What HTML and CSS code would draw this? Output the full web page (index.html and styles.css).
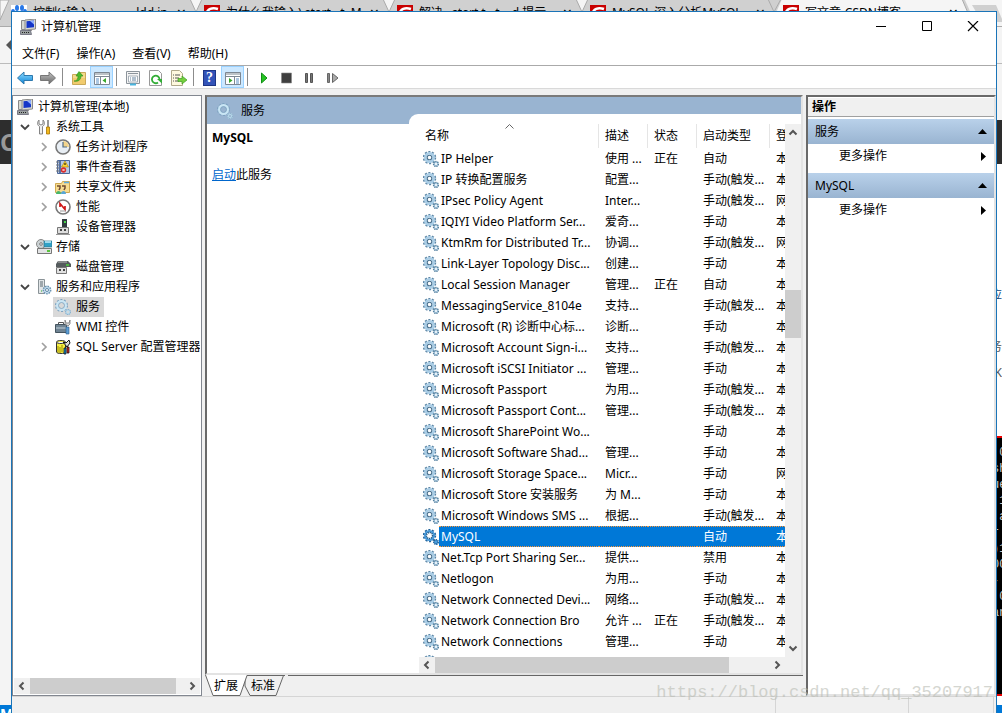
FILE: index.html
```html
<!DOCTYPE html>
<html lang="zh-CN">
<head>
<meta charset="utf-8">
<title>计算机管理</title>
<link rel="stylesheet" href="styles.css">
</head>
<body>
<svg class="defs" aria-hidden="true">
  <linearGradient id="blue" x1="0" y1="0" x2="0" y2="1"><stop offset="0" stop-color="#8fdcff"/><stop offset="1" stop-color="#0b84d8"/></linearGradient>
  <linearGradient id="gray" x1="0" y1="0" x2="0" y2="1"><stop offset="0" stop-color="#c4c4c4"/><stop offset="1" stop-color="#666"/></linearGradient>
  <symbol id="gear" viewBox="0 0 16 16">
    <circle cx="6.500" cy="6.500" r="5.700" fill="none" stroke="#5d86a5" stroke-width="2" stroke-dasharray="2 1.580"/>
    <circle cx="6.500" cy="6.500" r="4.200" fill="#fff" stroke="#a9cde6" stroke-width="2.600"/>
    <circle cx="6.500" cy="6.500" r="2.300" fill="#fff" stroke="#4a7290" stroke-width="1.100"/>
    <circle cx="13" cy="13" r="2.400" fill="#b7d4e8" stroke="#55809f" stroke-width="1.500" stroke-dasharray="1.200 .700"/>
    <circle cx="13" cy="13" r=".900" fill="#fff"/>
  </symbol>
  <symbol id="gear-on" viewBox="0 0 16 16">
    <circle cx="6.500" cy="6.500" r="5.700" fill="none" stroke="#22639a" stroke-width="2" stroke-dasharray="2 1.580"/>
    <circle cx="6.500" cy="6.500" r="4.200" fill="#fff" stroke="#4a9bda" stroke-width="2.600"/>
    <circle cx="6.500" cy="6.500" r="3" fill="#fff" stroke="#174c78" stroke-width="1.500" stroke-dasharray="1 1"/>
    <circle cx="13" cy="13" r="2.200" fill="#4a9bda" stroke="#22639a" stroke-width="1.600" stroke-dasharray="1.200 .600"/>
  </symbol>
  <symbol id="gear-pale" viewBox="0 0 16 16">
    <circle cx="6.500" cy="6.500" r="5.700" fill="none" stroke="#7da3c0" stroke-width="1.600" stroke-dasharray="2 1.580"/>
    <circle cx="6.500" cy="6.500" r="4.300" fill="none" stroke="#c9e6f5" stroke-width="2.400"/>
    <circle cx="6.500" cy="6.500" r="3" fill="none" stroke="#7a9fbc" stroke-width=".800"/>
    <circle cx="13" cy="13" r="2" fill="none" stroke="#b5d6e8" stroke-width="1.800"/>
    <circle cx="13" cy="13" r="2.600" fill="none" stroke="#7da3c0" stroke-width=".900" stroke-dasharray="1.200 .800"/>
  </symbol>
  <symbol id="computer" viewBox="0 0 16 16">
    <path d="M1.500 1.500h4v9h-4z" fill="#d7d9d2" stroke="#888"/><path d="M5 1l10.500-1v10L5 11z" fill="#d7d9d2" stroke="#8a8a8a"/>
    <path d="M6.500 2.200l7.500-.700v6.700l-7.500.700z" fill="#1536c8"/><path d="M10 1.900l4-.400v4z" fill="#8fb0ff"/>
    <path d="M8 10h4v2H8z" fill="#999"/><path d="M.500 11.500h10l1 4H.500z" fill="#9aa0a0" stroke="#667" stroke-width=".800"/><path d="M2 13.500h7" stroke="#222" stroke-dasharray="1 1"/>
  </symbol>
  <symbol id="down" viewBox="0 0 10 10"><path d="M1 3l4 4 4-4" fill="none" stroke="#444" stroke-width="1.800"/></symbol>
  <symbol id="right" viewBox="0 0 10 10"><path d="M3 1l4 4-4 4" fill="none" stroke="#a0a0a0" stroke-width="1.700"/></symbol>
  <symbol id="s-left" viewBox="0 0 16 16"><path d="M9.500 4.500L6 8l3.500 3.500" fill="none" stroke="#555" stroke-width="2"/></symbol>
  <symbol id="s-right" viewBox="0 0 16 16"><path d="M6.500 4.500L10 8l-3.500 3.500" fill="none" stroke="#555" stroke-width="2"/></symbol>
  <symbol id="s-up" viewBox="0 0 16 16"><path d="M4.500 10.500L8 7l3.500 3.500" fill="none" stroke="#555" stroke-width="2"/></symbol>
  <symbol id="s-down" viewBox="0 0 16 16"><path d="M4.500 5.500L8 9l3.500-3.500" fill="none" stroke="#555" stroke-width="2"/></symbol>
  <symbol id="csdn" viewBox="0 0 16 16"><path d="M0 0h16v16H0z" fill="#c90000"/><path d="M14 4C8 2 3 4 2.500 9S8 14 13 12" fill="none" stroke="#fff" stroke-width="2.500"/></symbol>
</svg>

<div class="backdrop">
  <svg class="strip" width="1002" height="27" aria-hidden="true">
    <path d="M0 0h1002v27H0z" fill="#d0d0d0"/>
    <path d="M0 0h9L0 20z" fill="#f5f5f5" stroke="#aaa"/>
    <path d="M190 -1l6 13 6-13z" fill="#f5f5f5" stroke="#aaa"/>
    <path d="M383 -1l6 13 6-13z" fill="#f5f5f5" stroke="#aaa"/>
    <path d="M576 -1l6 13 6-13z" fill="#f5f5f5" stroke="#aaa"/>
    <path d="M782 -1h180l12 28H770z" fill="#f5f5f5"/><path d="M768 -1l6 13 7-13M962 -1l12 28" fill="none" stroke="#aaa"/>
    <path d="M965 0h37v27h-25z" fill="#f5f5f5"/><path d="M972 5h24l6 14v3h-20z" fill="#d0d0d0"/><path d="M0 26.500h11M997 26.500h5" stroke="#aaa"/>
  </svg>
  <div class="browser-tabs">
    <div class="browser-tab"><svg class="icon" viewBox="0 0 16 16"><path d="M0 0h16v16H0z" fill="#fff"/><g fill="#2878e8"><ellipse cx="6" cy="3" rx="2" ry="3"/><ellipse cx="11" cy="3" rx="2" ry="3"/><ellipse cx="2" cy="7" rx="2" ry="3"/><ellipse cx="14" cy="7" rx="2" ry="3"/></g></svg><span>控制(c输入)&emsp; &emsp; &emsp;ldd in s</span><b>×</b></div>
    <div class="browser-tab"><svg class="icon"><use href="#csdn"/></svg><span>为什么我输入) start , t &nbsp;M</span><b>×</b></div>
    <div class="browser-tab"><svg class="icon"><use href="#csdn"/></svg><span>解决 &ensp;start t , t &ensp; d 提示</span><b>×</b></div>
    <div class="browser-tab"><svg class="icon"><use href="#csdn"/></svg><span>MySQL 深入分析MySQL</span><b>×</b></div>
    <div class="browser-tab"><svg class="icon"><use href="#csdn"/></svg><span>写文章-CSDN博客</span><b>×</b></div>
  </div>
  <div class="edge edge-left">
    <div class="edge-bar"><svg width="11" height="36"><path d="M11 13l-5 5 5 5z" fill="#555"/></svg></div>
    <div class="edge-gap"></div>
    <div class="edge-dark"><span>C</span></div>
    <div class="edge-fill"></div>
    <div class="edge-task">M</div>
  </div>
  <div class="edge edge-right">
    <div class="edge-bar"></div>
    <div class="edge-gap"></div>
    <div class="edge-dark"></div>
    <div class="edge-page"><p>应</p><p>务</p><p>K</p></div>
    <pre class="edge-console">:0
sh
ue
 1
:a
r
)1
00
-
:0
an

:
,</pre>
    <div class="edge-end"></div>
    <div class="edge-task"></div>
  </div>
</div>

<main class="window">
  <header class="title-bar">
    <svg class="icon"><use href="#computer"/></svg>
    <h1>计算机管理</h1>
    <div class="window-buttons">
      <button aria-label="最小化"><svg width="12" height="12"><path d="M1 5.500h10" stroke="#000"/></svg></button>
      <button aria-label="最大化"><svg width="12" height="12"><path d="M1.500 .500h9v9h-9z" fill="none" stroke="#000"/></svg></button>
      <button aria-label="关闭"><svg width="12" height="12"><path d="M1 0l10 10M11 0L1 10" stroke="#000" stroke-width="1.200"/></svg></button>
    </div>
  </header>
  <nav class="menu"><button>文件(F)</button><button>操作(A)</button><button>查看(V)</button><button>帮助(H)</button></nav>
  <div class="toolbar">
    <button aria-label="后退"><svg class="icon" viewBox="0 0 16 16"><path d="M.500 8L7 2v3.500h8.500v5H7V14z" fill="url(#blue)" stroke="#2d78ad"/></svg></button>
    <button aria-label="前进"><svg class="icon" viewBox="0 0 16 16"><path d="M15.500 8L9 2v3.500H.500v5H9V14z" fill="url(#gray)" stroke="#777"/></svg></button>
    <i></i>
    <button aria-label="向上一级"><svg class="icon" viewBox="0 0 16 16"><path d="M1.500 4.500h6l1-2h6v12h-13z" fill="#f5d98b" stroke="#c9a95a"/><path d="M2 8h12v6H2z" fill="#f1cb6d"/><path d="M3 11c3 0 4-2 4-5H5l3-4.500L12 6h-2c0 4-3 6-7 5z" fill="#4db92d" stroke="#2e8e1a" stroke-width=".600"/></svg></button>
    <button class="on" aria-label="显示控制台树"><svg class="icon" viewBox="0 0 16 16"><path d="M.500 2.500h15v12H.500z" fill="#fff" stroke="#7d8792"/><path d="M1 4h14M1 6.500h14" stroke="#7d8792" stroke-width="1.200"/><path d="M6.500 7v7" stroke="#7d8792"/><path d="M2 9h3M2 11h3M2 13h3" stroke="#5a8fc4"/><path d="M12 8v5l-3.500-2.500z" fill="#38a82b"/></svg></button>
    <i></i>
    <button aria-label="属性"><svg class="icon" viewBox="0 0 16 16"><path d="M1.500 1.500h13v12h-13z" fill="#f4f4f4" stroke="#8c949b"/><path d="M3 3.500h10" stroke="#8c949b"/><path d="M3.500 6h9v6h-9z" fill="#fff" stroke="#a7b0b8"/><path d="M5 8h1M7 8h4M5 10h1M7 10h4" stroke="#62809c"/><path d="M5 14.500h6" stroke="#49b5df" stroke-width="2"/></svg></button>
    <button aria-label="刷新"><svg class="icon" viewBox="0 0 16 16"><path d="M1.500.500h9l3 3v12h-12z" fill="#fff" stroke="#999"/><path d="M10 12.500A3.800 3.800 0 1 1 11.500 9" fill="none" stroke="#32ad36" stroke-width="1.800"/><path d="M9 9h5v4.500z" fill="#32ad36"/></svg></button>
    <button aria-label="导出列表"><svg class="icon" viewBox="0 0 16 16"><path d="M.500.500h8l3 3v12H.500z" fill="#fff9df" stroke="#b1a98b"/><path d="M2 5h1M4 5h5M2 8h1M4 8h4M2 11h1M4 11h4" stroke="#555"/><path d="M7 8.500h4V6l5 4-5 4v-2.500H7z" fill="#76cf3e" stroke="#3d9e24" stroke-width=".700"/></svg></button>
    <i></i>
    <button class="help" aria-label="帮助"><span>?</span></button>
    <button class="on" aria-label="显示操作窗格"><svg class="icon" viewBox="0 0 16 16"><path d="M.500 2.500h15v12H.500z" fill="#fff" stroke="#7d8792"/><path d="M1 4h14M1 6.500h14" stroke="#7d8792" stroke-width="1.200"/><path d="M9.500 7v7" stroke="#7d8792"/><path d="M11 9h3M11 11h3M11 13h3" stroke="#5a8fc4"/><path d="M4 8v5l3.500-2.500z" fill="#38a82b"/></svg></button>
    <i></i>
    <button aria-label="启动服务"><svg class="icon" viewBox="0 0 16 16"><path d="M5.500 3v10l5.500-5z" fill="#26c422" stroke="#129017"/></svg></button>
    <button aria-label="停止服务"><svg class="icon" viewBox="0 0 16 16"><path d="M2.500 3h10v10h-10z" fill="#3f3f3f" stroke="#888" stroke-width=".600"/></svg></button>
    <button aria-label="暂停服务"><svg class="icon" viewBox="0 0 16 16"><path d="M3.500 3.500h2v9h-2zM8.500 3.500h2v9h-2z" fill="#777" stroke="#555"/></svg></button>
    <button aria-label="重启动服务"><svg class="icon" viewBox="0 0 16 16"><path d="M2.500 3.500h2v9h-2z" fill="#888" stroke="#666"/><path d="M7.500 3.500v9l5.500-4.500z" fill="#aaa" stroke="#666"/></svg></button>
  </div>

  <div class="panes">
    <section class="tree-pane">
      <ul class="tree">
        <li><svg class="icon"><use href="#computer"/></svg><span>计算机管理(本地)</span></li>
        <li class="l1"><svg class="chev"><use href="#down"/></svg><svg class="icon" viewBox="0 0 16 16"><path d="M3 1v4l2 1 2-1V1c2 2 2 5-.5 6.500V15h-3V7.500C1 6 1 3 3 1z" fill="#eee" stroke="#777" stroke-width=".9"/><path d="M12 1v7" stroke="#777" stroke-width="1.500"/><path d="M10.500 8h3v7h-3z" fill="#f3b91d" stroke="#a87500" stroke-width=".8"/></svg><span>系统工具</span></li>
        <li class="l2"><svg class="chev"><use href="#right"/></svg><svg class="icon" viewBox="0 0 16 16"><circle cx="8" cy="8" r="7" fill="#e8eef4" stroke="#777" stroke-width="1.600"/><path d="M8 8V2a6 6 0 0 1 6 6z" fill="#f3d48a"/><path d="M8 3v5h4" fill="none" stroke="#4f6b86" stroke-width="1.200"/></svg><span>任务计划程序</span></li>
        <li class="l2"><svg class="chev"><use href="#right"/></svg><svg class="icon" viewBox="0 0 16 16"><path d="M2.500 1.500h12v13h-12z" fill="#b7c9e6" stroke="#4c6799"/><path d="M5 2v12" stroke="#38568c" stroke-width="1.500"/><path d="M1 3h3M1 6h3M1 9h3M1 12h3" stroke="#777"/><path d="M10 2l3.500 6h-7z" fill="#ffd533" stroke="#a78200" stroke-width=".6"/><path d="M10 4v2" stroke="#000"/><circle cx="8.500" cy="11" r="2.700" fill="#d92c2c"/><path d="M7.500 10l2 2m0-2l-2 2" stroke="#fff" stroke-width=".8"/></svg><span>事件查看器</span></li>
        <li class="l2"><svg class="chev"><use href="#right"/></svg><svg class="icon" viewBox="0 0 16 16"><path d="M.500 4.500h6l1-2h7v11H.500z" fill="#f7dc91" stroke="#d0a951"/><path d="M9 3.500h5" stroke="#60aee0" stroke-width="1.500"/><path d="M2 7h3v2l-1 2M7 7h3v2l-1 2" fill="none" stroke="#704b31" stroke-width="1.500"/><path d="M1 15c0-4 5-4 5 0z" fill="#49b66b"/><path d="M6 15c0-4 5-4 5 0z" fill="#59a7d7"/></svg><span>共享文件夹</span></li>
        <li class="l2"><svg class="chev"><use href="#right"/></svg><svg class="icon" viewBox="0 0 16 16"><circle cx="8" cy="8" r="7" fill="#fff" stroke="#777" stroke-width="1.600"/><path d="M5 8V4.500l5 6V7" fill="none" stroke="#cf1717" stroke-width="1.700"/><path d="M5 12h6" stroke="#999"/></svg><span>性能</span></li>
        <li class="l2"><svg class="chev"></svg><svg class="icon" viewBox="0 0 16 16"><path d="M7 0h5v9H7z" fill="#303b3f"/><path d="M9 2h2v2H9z" fill="#45d447"/><path d="M2.500 8.500h11v6h-11z" fill="#ddd" stroke="#777"/><path d="M1 15.500h14" stroke="#999"/><path d="M5 10h2v2H5zM9 10h2v2H9z" fill="#444"/></svg><span>设备管理器</span></li>
        <li class="l1"><svg class="chev"><use href="#down"/></svg><svg class="icon" viewBox="0 0 16 16"><circle cx="5" cy="5" r="4.500" fill="#ccd3d5" stroke="#888"/><circle cx="5" cy="5" r="1.300" fill="#fff" stroke="#777"/><path d="M8 2h8v6H8z" fill="#31a2c7" stroke="#317389" stroke-width=".7"/><path d="M9 3h6" stroke="#c7effb" stroke-width="1.500"/><path d="M1.500 9.500h14v5h-14z" fill="#e2e3e4" stroke="#777"/><path d="M11 11h3v2h-3z" fill="#5ac33e"/></svg><span>存储</span></li>
        <li class="l2"><svg class="chev"></svg><svg class="icon" viewBox="0 0 16 16"><path d="M3 2h10l3 3v3H1V5z" fill="#555b5d"/><path d="M3 3h9" stroke="#bbb"/><path d="M11 6h3" stroke="#4ed63d" stroke-width="1.500"/><path d="M1.500 8.500h10v6h-10z" fill="#e2e2e2" stroke="#777"/><path d="M4 10h2v2H4zM8 10h2v2H8z" fill="#444"/></svg><span>磁盘管理</span></li>
        <li class="l1"><svg class="chev"><use href="#down"/></svg><svg class="icon" viewBox="0 0 16 16"><path d="M2.500.500h6v14h-6z" fill="#e1e5e7" stroke="#8a9397"/><path d="M4 3h3M4 5h3M4 7h3" stroke="#5d6b72"/><path d="M5 12h1" stroke="#33b533"/><circle cx="11" cy="11" r="3.700" fill="#c6deef" stroke="#6b94b1" stroke-width="1.500" stroke-dasharray="1.500 1"/><circle cx="11" cy="11" r="1.500" fill="#fff" stroke="#618aa8"/></svg><span>服务和应用程序</span></li>
        <li class="l2 chosen"><svg class="chev"></svg><svg class="icon"><use href="#gear-pale"/></svg><span>服务</span></li>
        <li class="l2"><svg class="chev"></svg><svg class="icon" viewBox="0 0 16 16"><path d="M.500 5.500h11v8H.500z" fill="#6f8392" stroke="#44545f"/><path d="M3.500 5V3.500h5V5" fill="none" stroke="#555"/><path d="M1 9h11" stroke="#c5d2db"/><path d="M10 1l1 3h3l1-3v4l-2 2-3-2z" fill="#ddd" stroke="#777" stroke-width=".800"/><path d="M11 8h3v7h-3z" fill="#5d9dd3" stroke="#285d8b" stroke-width=".6"/></svg><span>WMI 控件</span></li>
        <li class="l2"><svg class="chev"><use href="#right"/></svg><svg class="icon" viewBox="0 0 16 16"><path d="M1.500 3c0-2 9-2 9 0v10c0 2-9 2-9 0z" fill="#f6ef45" stroke="#333"/><path d="M1.500 3c0 2 9 2 9 0" fill="#fff" stroke="#333"/><path d="M3 7v6M5 8v6M7 6v7" stroke="#9b8d00"/><path d="M14 1l-3 3-3-1 4 5 3-4z" fill="#ddd" stroke="#111"/><path d="M9 9h2v6H9z" fill="#1595db" stroke="#111" stroke-width=".8"/><path d="M12 8h2v6h-2z" fill="#e52222" stroke="#111" stroke-width=".8"/></svg><span>SQL Server 配置管理器</span></li>
      </ul>
      <div class="hscroll"><svg class="icon"><use href="#s-left"/></svg><div class="track"><div class="thumb" style="width:95%"></div></div><svg class="icon"><use href="#s-right"/></svg></div>
    </section>

    <section class="center">
      <div class="services">
        <div class="services-head"><svg class="icon"><use href="#gear-pale"/></svg><h2>服务</h2></div>
        <div class="services-body">
          <div class="detail"><h3>MySQL</h3><p><a href="#start">启动</a>此服务</p></div>
          <div class="list">
            <div class="list-view">
              <table>
                <colgroup><col><col class="c-desc"><col class="c-state"><col class="c-type"><col class="c-user"></colgroup>
                <thead><tr><th>名称<svg class="sort" width="9" height="5"><path d="M.500 4.500l4-4 4 4" fill="none" stroke="#666"/></svg></th><th>描述</th><th>状态</th><th>启动类型</th><th>登</th></tr></thead>
                <tbody>
                <tr><td><div><svg class="icon"><use href="#gear"/></svg><span>IP Helper</span></div></td><td>使用 ...</td><td>正在</td><td>自动</td><td>本</td></tr>
                <tr><td><div><svg class="icon"><use href="#gear"/></svg><span>IP 转换配置服务</span></div></td><td>配置...</td><td></td><td>手动(触发...</td><td>本</td></tr>
                <tr><td><div><svg class="icon"><use href="#gear"/></svg><span>IPsec Policy Agent</span></div></td><td>Inter...</td><td></td><td>手动(触发...</td><td>网</td></tr>
                <tr><td><div><svg class="icon"><use href="#gear"/></svg><span>IQIYI Video Platform Ser...</span></div></td><td>爱奇...</td><td></td><td>手动</td><td>本</td></tr>
                <tr><td><div><svg class="icon"><use href="#gear"/></svg><span>KtmRm for Distributed Tr...</span></div></td><td>协调...</td><td></td><td>手动(触发...</td><td>网</td></tr>
                <tr><td><div><svg class="icon"><use href="#gear"/></svg><span>Link-Layer Topology Disc...</span></div></td><td>创建...</td><td></td><td>手动</td><td>本</td></tr>
                <tr><td><div><svg class="icon"><use href="#gear"/></svg><span>Local Session Manager</span></div></td><td>管理...</td><td>正在</td><td>自动</td><td>本</td></tr>
                <tr><td><div><svg class="icon"><use href="#gear"/></svg><span>MessagingService_8104e</span></div></td><td>支持...</td><td></td><td>手动(触发...</td><td>本</td></tr>
                <tr><td><div><svg class="icon"><use href="#gear"/></svg><span>Microsoft (R) 诊断中心标...</span></div></td><td>诊断...</td><td></td><td>手动</td><td>本</td></tr>
                <tr><td><div><svg class="icon"><use href="#gear"/></svg><span>Microsoft Account Sign-i...</span></div></td><td>支持...</td><td></td><td>手动(触发...</td><td>本</td></tr>
                <tr><td><div><svg class="icon"><use href="#gear"/></svg><span>Microsoft iSCSI Initiator ...</span></div></td><td>管理...</td><td></td><td>手动</td><td>本</td></tr>
                <tr><td><div><svg class="icon"><use href="#gear"/></svg><span>Microsoft Passport</span></div></td><td>为用...</td><td></td><td>手动(触发...</td><td>本</td></tr>
                <tr><td><div><svg class="icon"><use href="#gear"/></svg><span>Microsoft Passport Cont...</span></div></td><td>管理...</td><td></td><td>手动(触发...</td><td>本</td></tr>
                <tr><td><div><svg class="icon"><use href="#gear"/></svg><span>Microsoft SharePoint Wo...</span></div></td><td></td><td></td><td>手动</td><td>本</td></tr>
                <tr><td><div><svg class="icon"><use href="#gear"/></svg><span>Microsoft Software Shad...</span></div></td><td>管理...</td><td></td><td>手动</td><td>本</td></tr>
                <tr><td><div><svg class="icon"><use href="#gear"/></svg><span>Microsoft Storage Space...</span></div></td><td>Micr...</td><td></td><td>手动</td><td>网</td></tr>
                <tr><td><div><svg class="icon"><use href="#gear"/></svg><span>Microsoft Store 安装服务</span></div></td><td>为 M...</td><td></td><td>手动</td><td>本</td></tr>
                <tr><td><div><svg class="icon"><use href="#gear"/></svg><span>Microsoft Windows SMS ...</span></div></td><td>根据...</td><td></td><td>手动(触发...</td><td>本</td></tr>
                <tr class="selected"><td><div><svg class="icon"><use href="#gear-on"/></svg><span>MySQL</span></div></td><td></td><td></td><td>自动</td><td>本</td></tr>
                <tr><td><div><svg class="icon"><use href="#gear"/></svg><span>Net.Tcp Port Sharing Ser...</span></div></td><td>提供...</td><td></td><td>禁用</td><td>本</td></tr>
                <tr><td><div><svg class="icon"><use href="#gear"/></svg><span>Netlogon</span></div></td><td>为用...</td><td></td><td>手动</td><td>本</td></tr>
                <tr><td><div><svg class="icon"><use href="#gear"/></svg><span>Network Connected Devi...</span></div></td><td>网络...</td><td></td><td>手动(触发...</td><td>本</td></tr>
                <tr><td><div><svg class="icon"><use href="#gear"/></svg><span>Network Connection Bro</span></div></td><td>允许 ...</td><td>正在</td><td>手动(触发...</td><td>本</td></tr>
                <tr><td><div><svg class="icon"><use href="#gear"/></svg><span>Network Connections</span></div></td><td>管理...</td><td></td><td>手动</td><td>本</td></tr>
                <tr><td><div><svg class="icon"><use href="#gear"/></svg></div></td><td></td><td></td><td></td><td></td></tr>
                </tbody>
              </table>
            </div>
            <div class="vscroll"><svg class="icon"><use href="#s-up"/></svg><div class="track"><div class="before"></div><div class="thumb"></div><div class="after"></div></div><svg class="icon"><use href="#s-down"/></svg></div>
            <div class="hscroll"><svg class="icon"><use href="#s-left"/></svg><div class="track"><div class="thumb" style="width:88%"></div></div><svg class="icon"><use href="#s-right"/></svg></div>
            <div class="corner"></div>
          </div>
        </div>
      </div>
      <div class="view-tabs">
        <svg class="tab-shape" width="80" height="21" aria-hidden="true"><path d="M40 .500h38.500L71 20.500H45L40 11z" fill="#f0f0f0" stroke="#666"/><path d="M.500 0L8 20.500h27L42 0z" fill="#fff"/><path d="M.500 0L8 20.500h27L42 .500h38" fill="none" stroke="#666"/></svg>
        <button>扩展</button><button>标准</button><div class="rule"></div>
      </div>
    </section>

    <aside class="actions">
      <h2>操作</h2>
      <h3>服务<svg width="9" height="5"><path d="M0 5l4.500-5L9 5z"/></svg></h3>
      <button>更多操作<svg width="5" height="9"><path d="M0 0l5 4.500L0 9z"/></svg></button>
      <h3>MySQL<svg width="9" height="5"><path d="M0 5l4.500-5L9 5z"/></svg></h3>
      <button>更多操作<svg width="5" height="9"><path d="M0 0l5 4.500L0 9z"/></svg></button>
    </aside>
  </div>
  <footer class="status"><div class="s-main"></div><div class="s-mid"></div><div class="s-end"></div></footer>
</main>
<div class="watermark">https://blog.csdn.net/qq_35207917</div>
</body>
</html>
```
FILE: styles.css
```css
* { box-sizing: border-box; }
body {
  margin: 0;
  height: 100vh;
  overflow: hidden;
  position: relative;
  background: #f4f4f4;
  color: #000;
  font: 12px/20px "Noto Sans", "Noto Sans CJK SC", sans-serif;
}
h1, h2, h3, p, ul, pre { margin: 0; padding: 0; font-size: 12px; font-weight: 400; }
button { border: 0; padding: 0; background: none; font: inherit; color: inherit; }
svg { display: block; flex: none; }
.defs { position: absolute; width: 0; height: 0; }
.icon { width: 16px; height: 16px; }

/* Browser behind the window */
.backdrop { position: absolute; inset: 0; overflow: hidden; }
.strip { position: absolute; top: 0; left: 0; }
.browser-tabs { position: absolute; top: 5px; left: 11px; display: flex; }
.browser-tab { width: 193px; padding-right: 18px; display: flex; gap: 6px; line-height: 16px; white-space: nowrap; }
.browser-tab span { flex: 1; overflow: hidden; }
.browser-tab b { font-size: 16px; font-weight: 400; }
.edge { position: absolute; top: 27px; bottom: 0; display: flex; flex-direction: column; overflow: hidden; }
.edge-left { left: 0; width: 11px; }
.edge-right { right: 0; width: 5px; background: #fff; }
.edge-bar { height: 37px; border-bottom: 1px solid #bbb; background: #f4f4f4; }
.edge-gap { height: 56px; background: #f4f4f4; }
.edge-dark { height: 44px; background: #2d2d2d; color: #999; font: bold 24px/44px "Noto Sans", sans-serif; }
.edge-fill { flex: 1; }
.edge-task { height: 8px; overflow: hidden; background: #0078d7; color: #fff; font: bold 14px/18px "Noto Sans", sans-serif; }
.edge-page { height: 272px; padding-top: 121px; color: #555; }
.edge-page p { width: 5px; height: 26px; display: flex; justify-content: flex-end; }
.edge-page p:first-child { height: 52px; color: #147; }
.edge-console { flex: 1; margin-left: -5px; padding-top: 7px; overflow: hidden; background: #000; color: #ccc; border-top: 2px solid #e00; border-bottom: 2px solid #e00; font: 12px/16px "Liberation Mono", monospace; }
.edge-end { height: 9px; }

/* Window frame */
.window { position: absolute; inset: 11px 5px 0 11px; display: flex; flex-direction: column; border: 1px solid #1a74b8; border-bottom: 0; background: #f0f0f0; }
.title-bar { height: 30px; padding-left: 8px; display: flex; align-items: center; gap: 5px; background: #fff; }
.window-buttons { margin-left: auto; display: flex; }
.window-buttons button { width: 46px; height: 30px; display: grid; place-items: center; }
.menu { height: 23px; padding-left: 10px; display: flex; align-items: center; gap: 17px; background: #fff; }
.toolbar { height: 24px; padding-left: 1px; display: flex; align-items: center; background: #fff; border-top: 1px solid #aaa; border-bottom: 1px solid #d9d9d9; }
.toolbar button { width: 23px; height: 22px; padding-top: 1px; display: grid; place-items: center; }
.toolbar i { width: 1px; height: 18px; margin: 0 4px 0 3px; background: #8c8c8c; }
.toolbar .on { background: #cce8ff; border: 1px solid #99d1ff; }
.help span { width: 13px; height: 16px; background: #3353b8; border: 1px solid #1e3585; color: #fff; font: bold 14px/14px "Liberation Serif", serif; }
.panes { flex: 1; min-height: 0; padding-top: 6px; display: grid; grid-template-columns: 190px minmax(0, 1fr) 190px; grid-template-rows: minmax(0, 1fr); gap: 3px; }

/* Scroll bars */
.hscroll { height: 16px; display: flex; background: #f0f0f0; }
.vscroll { display: flex; flex-direction: column; background: #f0f0f0; }
.track { flex: 1; min-height: 0; display: flex; }
.vscroll .track { flex-direction: column; }
.thumb { background: #cdcdcd; }
.vscroll .thumb { flex: 48; }
.before { flex: 150; }
.after { flex: 302; }

/* Console tree */
.tree-pane { display: flex; flex-direction: column; padding: 1px; border: 1px solid #828790; background: #fff; }
.tree { flex: 1; min-height: 0; overflow: hidden; list-style: none; }
.tree li { height: 20px; padding-left: 3px; display: flex; align-items: center; white-space: nowrap; }
.tree li > span { padding-left: 5px; }
.tree .chev { width: 10px; height: 10px; margin-right: 6px; }
.tree .l1 { padding-left: 6px; }
.tree .l1 > span { padding-left: 4px; }
.tree .l2 { padding-left: 25px; }
.tree .chosen > span { margin-right: auto; padding-right: 4px; background: #d9d9d9; }
.tree .chosen .icon { width: 18px; height: 20px; margin-left: -2px; padding: 2px 0 2px 2px; background: #d9d9d9; }

/* Services */
.center { display: flex; flex-direction: column; min-width: 0; }
.services { flex: 1; min-height: 0; display: flex; flex-direction: column; background: #fff; border: 2px solid #696969; border-top-color: #7a7a7a; border-right-color: #e3e3e3; border-bottom-color: #e3e3e3; }
.services-head { height: 27px; padding-left: 10px; display: flex; align-items: center; gap: 8px; background: #99b4d1; }
.services-body { flex: 1; min-height: 0; display: grid; grid-template-columns: 202px minmax(0, 1fr); grid-template-rows: minmax(0, 1fr); }
.detail { padding: 4px 5px; }
.detail h3 { font-weight: 700; margin-bottom: 17px; }
.detail a { color: #0066cc; }
.list { margin-top: -10px; padding: 10px 0 0 10px; display: grid; grid-template-columns: minmax(0, 1fr) 16px; grid-template-rows: minmax(0, 1fr) 16px; background: #fff; border-top-left-radius: 9px; }
.list-view { overflow: hidden; }
.corner { background: #f0f0f0; }
table { width: 100%; table-layout: fixed; border-spacing: 0; }
.c-desc, .c-state { width: 49px; }
.c-type { width: 73px; }
.c-user { width: 15px; }
th { position: relative; height: 24px; padding: 0 0 0 6px; border-right: 1px solid #e5e5e5; text-align: left; font-weight: 400; line-height: 20px; white-space: nowrap; overflow: hidden; }
th:last-child { border-right: 0; }
.sort { position: absolute; left: calc(50% - 4px); top: 0; }
td { height: 21px; padding: 0 0 0 6px; line-height: 19px; white-space: nowrap; overflow: hidden; }
td:first-child { padding: 0; }
td div { height: 21px; padding-left: 4px; display: flex; align-items: center; }
td div span { flex: 1; height: 21px; padding-left: 2px; line-height: 21px; }
.selected td, .selected td div span { background: #0078d7; color: #fff; border: solid #0078d7; border-width: 1px 0; border-top: 1px dotted #ff9838; border-bottom: 1px dotted #ff9838; }
.selected td:first-child { background: none; border: 0; }
.selected td div span { line-height: 19px; }

.view-tabs { position: relative; height: 21px; padding-left: 9px; display: flex; gap: 13px; }
.view-tabs button { position: relative; height: 21px; line-height: 21px; }
.tab-shape { position: absolute; top: 0; left: 0; }
.rule { flex: 1; height: 1px; background: #666; }

/* Actions */
.actions { display: flex; flex-direction: column; background: #fff; border: 2px solid #696969; border-right: 2px solid #e3e3e3; border-bottom: 2px solid #e3e3e3; }
.actions h2 { height: 20px; padding-left: 4px; margin-bottom: 2px; background: #f0f0f0; border-bottom: 1px solid #a0a0a0; box-shadow: inset 0 1px #fff; font-weight: 700; }
.actions h3 { height: 25px; padding: 0 7px; display: flex; align-items: center; justify-content: space-between; background: linear-gradient(#b9d1ea, #99b4d1); }
.actions button { height: 24px; margin-bottom: 5px; padding: 0 8px 0 31px; display: flex; align-items: center; justify-content: space-between; }

.status { height: 17px; display: flex; border-top: 1px solid #d5d5d5; }
.status div { border-right: 1px solid #d5d5d5; }
.s-main { flex: 1; }
.s-mid { width: 133px; }
.s-end { width: 85px; margin-right: 2px; }
.watermark { position: absolute; right: 9px; bottom: 10px; color: #b9bcb3; opacity: .6; font: 17px/20px "Liberation Mono", monospace; }
```
